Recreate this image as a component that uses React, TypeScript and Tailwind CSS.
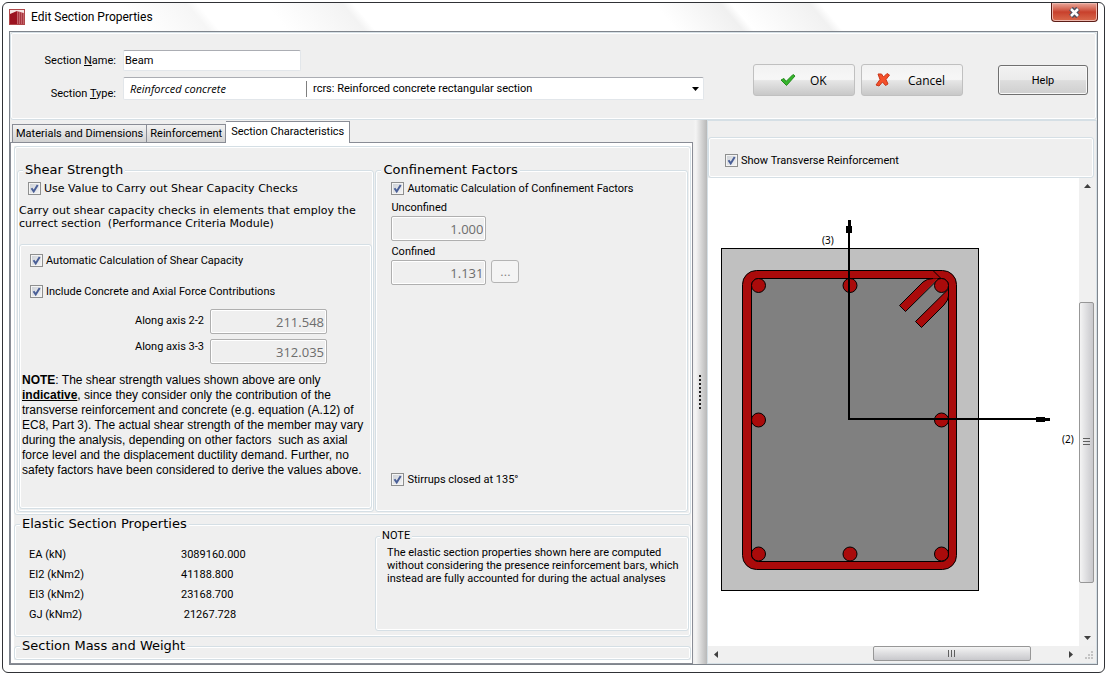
import type { ReactNode } from "react";

interface CheckProps {
  id: string;
  children: ReactNode;
  wide?: boolean;
}

function Check({ id, children, wide = false }: CheckProps) {
  return (
    <label htmlFor={id} className="flex h-[18px] items-center gap-[3px]">
      <span className="relative block h-[13px] w-[13px] shrink-0">
        <input
          id={id}
          type="checkbox"
          defaultChecked
          className="peer block h-[13px] w-[13px] appearance-none border border-[#8e8f8f] bg-gradient-to-br from-[#cbcfd5] to-[#f6f6f6] shadow-[inset_0_0_0_1px_#f4f4f4]"
        />
        <svg viewBox="0 0 13 13" className="pointer-events-none absolute inset-0 hidden h-[13px] w-[13px] peer-checked:block">
          <path d="M3.5 6.2 L5.7 9.4 L9.7 2.9" fill="none" stroke="#4a5f97" strokeWidth="2" />
        </svg>
      </span>
      <span className={wide ? "font-['DejaVu_Sans',sans-serif] text-[11px] whitespace-nowrap" : "whitespace-nowrap"}>{children}</span>
    </label>
  );
}

interface GroupProps {
  title: string;
  className?: string;
  children?: ReactNode;
}

function Group({ title, className = "", children }: GroupProps) {
  return (
    <fieldset className={`min-w-0 rounded-[3px] border border-[#d5dfe5] shadow-[inset_0_0_0_1px_#fff] ${className}`}>
      <legend className="ml-[5px] bg-[#efefef] px-[2px] font-['DejaVu_Sans',sans-serif] text-[13px] leading-[18px]">{title}</legend>
      {children}
    </fieldset>
  );
}

function ValueBox({ id, value, className }: { id: string; value: string; className: string }) {
  return (
    <input
      id={id}
      disabled
      defaultValue={value}
      className={`h-[25px] rounded-[2px] border border-[#afafaf] bg-[#efefef] pr-[2px] text-right font-['Open_Sans',sans-serif] text-[13px] text-[#6d6d6d] shadow-[inset_0_0_0_1px_#fff] ${className}`}
    />
  );
}

const properties = [
  { name: "EA (kN)", value: "3089160.000" },
  { name: "EI2 (kNm2)", value: "41188.800" },
  { name: "EI3 (kNm2)", value: "23168.700" },
  { name: "GJ (kNm2)", value: " 21267.728" },
];

const bars = [
  [50.5, 107.5],
  [142, 107.5],
  [233.5, 107.5],
  [50.5, 242],
  [233.5, 242],
  [50.5, 376],
  [142, 376],
  [233.5, 376],
];

function SectionDrawing() {
  return (
    <svg width="371" height="468" viewBox="0 0 371 468" className="block shrink-0">
      <rect x="13.5" y="70.5" width="257" height="342" fill="#c0c0c0" stroke="#000" />
      {/* stirrup */}
      <rect x="34.5" y="92.5" width="214" height="299" rx="14" fill="#aa0b0b" stroke="#000" />
      <rect x="43.5" y="100.5" width="197" height="283" rx="7" fill="#808080" stroke="#000" />
      {/* 135 degree hooks */}
      <path d="M191.500 127.500 L215 104 Q219 100.500 225 100.500 L230 100.500 L197.500 133.500 Z" fill="#aa0b0b" />
      <path d="M231 100.500 L197.500 133.500 L191.500 127.500 L215 104 Q219 100.500 225 100.500" fill="none" stroke="#000" />
      <path d="M240.500 111 L207.500 143.500 L213.500 149.500 L236 127 Q240.500 122 240.500 118 Z" fill="#aa0b0b" stroke="#000" />
      <path d="M225 92.500 L233 100.500" stroke="#000" />
      {bars.map(([cx, cy]) => (
        <circle key={`${cx}-${cy}`} cx={cx} cy={cy} r="7" fill="#aa0b0b" stroke="#000" />
      ))}
      {/* local axes */}
      <path d="M141 44 V241 H340" fill="none" stroke="#000" strokeWidth="2" />
      <path d="M140 42 h3 v6 h1 v7 h-6 v-7 h2 Z" />
      <path d="M328 239 h9 v1 h5 v3 h-5 v1 h-9 Z" />
      <text x="114" y="66" className="font-['Noto_Sans',sans-serif] text-[10px]">(3)</text>
      <text x="354" y="265" className="font-['Noto_Sans',sans-serif] text-[10px]">(2)</text>
    </svg>
  );
}

function Arrow({ d, label }: { d: string; label: string }) {
  return (
    <button aria-label={label} className="flex h-[17px] w-[17px] shrink-0 items-center justify-center">
      <svg width="7" height="7" viewBox="0 0 7 7">
        <path d={d} fill="#404040" />
      </svg>
    </button>
  );
}

export default function App() {
  return (
    <div className="flex min-h-screen flex-col bg-white p-[2px] pr-[3px] pb-[3px] font-['Roboto',sans-serif] text-[11px] leading-[13px] text-black">
      <div className="flex flex-1 flex-col rounded-[6px] border border-[#303236] bg-white px-[6px] pb-[7px]">
        {/* title bar */}
        <header className="flex h-[28px] items-center gap-[6px] bg-[linear-gradient(50deg,#fff_12%,#f6f6f6_18%,#fff_19%,#fff_25%,#f3f3f3_32%,#fff_33%,#fff_60%,#f0f0f0_66%,#fff_67%,#f1f1f1_74%,#fff_75%)]">
          <svg width="16" height="16" viewBox="0 0 16 16">
            <rect x=".5" y=".5" width="15" height="15" fill="#f6e4e2" stroke="#b0484a" />
            <path d="M1 5 L8 2 V15 H1 Z" fill="#9c1320" />
            <path d="M8 2 L15 4 V15 H8 Z" fill="#c4636a" />
            <path d="M9.500 3 V15 M11.500 3.500 V15 M13.500 4 V15" stroke="#a83640" />
          </svg>
          <h1 className="flex-1 text-[12px] leading-4">Edit Section Properties</h1>
          <button
            aria-label="Close"
            className="flex h-[19px] w-[47px] items-center justify-center self-start rounded-b-[4px] border border-t-0 border-[#5c1d17] bg-gradient-to-b from-[#e8a79b] via-[#c8402c] via-50% to-[#d9694c] shadow-[inset_0_0_0_1px_#eeb8ad]"
          >
            <svg width="13" height="11" viewBox="0 0 13 11">
              <path d="M3 1.500 L10 9.500 M10 1.500 L3 9.500" stroke="#4b4f5f" strokeWidth="5" />
              <path d="M3 2 L10 9 M10 2 L3 9" stroke="#fff" strokeWidth="2.500" />
            </svg>
          </button>
        </header>

        <div className="flex flex-1 flex-col border border-[#7f858d] bg-[#efefef]">
          {/* name, type and dialog buttons */}
          <div className="flex items-start gap-[49px] rounded-[3px] border border-[#d5dfe5] pr-2 pb-[19px] pt-[17px] shadow-[inset_0_0_0_1px_#fff]">
            <div className="grid flex-1 grid-cols-[105px_minmax(0,1fr)] gap-x-[7px] gap-y-[6px]">
              <label htmlFor="name" className="self-center text-right">
                Section <u>N</u>ame:
              </label>
              <input
                id="name"
                defaultValue="Beam"
                className="h-[21px] w-[178px] rounded-[2px] border border-[#e2e6ea] border-t-[#abadb3] bg-white px-px"
              />
              <label htmlFor="type" className="self-end text-right">
                Section <u>T</u>ype:
              </label>
              <div className="relative flex h-[23px] items-center rounded-[2px] border border-[#e2e6ea] border-t-[#abadb3] bg-white">
                <span className="w-[182px] pl-[6px] font-['Open_Sans',sans-serif] italic">Reinforced concrete</span>
                <select id="type" className="h-4 flex-1 appearance-none border-l border-[#7f7f7f] pl-[6px] leading-4">
                  <option>rcrs: Reinforced concrete rectangular section</option>
                </select>
                <svg width="7" height="4" viewBox="0 0 7 4" className="pointer-events-none absolute right-1">
                  <path d="M0 0 H7 L3.500 4 Z" />
                </svg>
              </div>
            </div>

            <div className="flex items-center pt-[14px] font-['Open_Sans',sans-serif] text-[12px]">
              <button className="mr-[6px] flex h-8 w-[102px] items-center rounded-[3px] border border-[#c0c0c0] bg-[linear-gradient(#f2f2f2,#f7f7f7_48%,#e6e6e6_52%,#c8c8c8)] pl-[26px]">
                <svg width="16" height="14" viewBox="0 0 16 14" className="mr-[14px]">
                  <path d="M1 7 L4 5.500 L6 8.500 L13 1.500 L15 3 L6.500 12.500 Z" fill="#35b52b" stroke="#258b1e" />
                </svg>
                OK
              </button>
              <button className="mr-[35px] flex h-8 w-[102px] items-center rounded-[3px] border border-[#c0c0c0] bg-[linear-gradient(#f2f2f2,#f7f7f7_48%,#e6e6e6_52%,#c8c8c8)] pl-[13px]">
                <svg width="16" height="14" viewBox="0 0 16 14" className="mr-[17px]">
                  <path d="M3 1 L6.500 1 L8.500 4 L12 .5 L14.500 2 L11 6.500 L13 11 L10.500 12.500 L7.500 9 L4 13 L1 12 L5 6.500 Z" fill="#f4502a" stroke="#c9361a" />
                </svg>
                Cancel
              </button>
              <button className="h-[30px] w-[90px] rounded-[3px] border border-[#707070] bg-[linear-gradient(#f2f2f2,#ebebeb_50%,#dddddd_52%,#cfcfcf)] font-['Roboto',sans-serif] text-[11px] shadow-[inset_0_0_0_1px_#f8f8f8]">
                Help
              </button>
            </div>
          </div>

          <div className="grid flex-1 grid-cols-[683fr_14px_390fr]">
            <div className="flex min-w-0 flex-col">
              <div role="tablist" className="relative z-10 -mb-px flex items-end pt-px pl-[2px]">
                <button role="tab" className="h-[19px] border border-[#898c95] bg-gradient-to-b from-[#f2f2f2] to-[#d2d2d2] px-[3px]">
                  Materials and Dimensions
                </button>
                <button role="tab" className="h-[19px] border border-l-0 border-[#898c95] bg-gradient-to-b from-[#f2f2f2] to-[#d2d2d2] px-[3px]">
                  Reinforcement
                </button>
                <button role="tab" aria-selected="true" className="h-[22px] border border-b-0 border-l-0 border-[#898c95] bg-white px-[5px] pb-[3px]">
                  Section Characteristics
                </button>
              </div>

              <div className="flex flex-1 flex-col border border-[#898c95] bg-white p-[3px] pr-px">
                <div className="flex flex-1 flex-col bg-[#efefef]">
                  <div className="grid flex-1 grid-cols-[358fr_313fr] gap-px rounded-[3px] border border-[#d5dfe5] p-[2px] pt-[14px] shadow-[inset_0_0_0_1px_#fff]">
                    <Group title="Shear Strength">
                      <div className="flex flex-col px-px pb-px">
                        <div className="pl-[9px]">
                          <Check id="useValue" wide>
                            Use Value to Carry out Shear Capacity Checks
                          </Check>
                        </div>
                        <p className="mt-[7px] font-['DejaVu_Sans',sans-serif] text-[11px] leading-[13px] whitespace-pre">
                          {"Carry out shear capacity checks in elements that employ the\ncurrect section  (Performance Criteria Module)"}
                        </p>
                        <div className="mt-[14px] rounded-[3px] border border-[#d5dfe5] pt-[6px] pb-[30px] shadow-[inset_0_0_0_1px_#fff]">
                          <div className="flex flex-col gap-[13px] pl-[10px]">
                            <Check id="autoShear">Automatic Calculation of Shear Capacity</Check>
                            <Check id="axial">Include Concrete and Axial Force Contributions</Check>
                          </div>
                          <div className="mt-[9px] grid grid-cols-[184px_117px] gap-x-[6px] gap-y-[5px]">
                            <label htmlFor="axis22" className="mt-[5px] text-right">Along axis 2-2</label>
                            <ValueBox id="axis22" value="211.548" className="w-full" />
                            <label htmlFor="axis33" className="mt-px text-right">Along axis 3-3</label>
                            <ValueBox id="axis33" value="312.035" className="w-full" />
                          </div>
                          <p className="mt-[9px] px-[2px] font-['Liberation_Sans',sans-serif] text-[12px] leading-[15px] whitespace-pre">
                            <b>NOTE</b>: The shear strength values shown above are only
                            <br />
                            <b className="underline">indicative</b>, since they consider only the contribution of the
                            <br />
                            transverse reinforcement and concrete (e.g. equation (A.12) of
                            <br />
                            EC8, Part 3). The actual shear strength of the member may vary
                            <br />
                            {"during the analysis, depending on other factors  such as axial"}
                            <br />
                            force level and the displacement ductility demand. Further, no
                            <br />
                            safety factors have been considered to derive the values above.
                          </p>
                        </div>
                      </div>
                    </Group>

                    <Group title="Confinement Factors">
                      <div className="flex flex-col pl-[15px]">
                        <Check id="autoConf">Automatic Calculation of Confinement Factors</Check>
                        <label htmlFor="unconfined" className="mt-1">Unconfined</label>
                        <ValueBox id="unconfined" value="1.000" className="mt-[2px] w-[95px]" />
                        <label htmlFor="confined" className="mt-1">Confined</label>
                        <div className="mt-[2px] flex gap-[5px]">
                          <ValueBox id="confined" value="1.131" className="w-[95px]" />
                          <button className="h-[23px] w-7 rounded-[3px] border border-[#b4b4b4] bg-[#f4f4f4] text-[13px] text-[#838383]">...</button>
                        </div>
                        <div className="mt-[185px]">
                          <Check id="stirrups">Stirrups closed at 135°</Check>
                        </div>
                      </div>
                    </Group>
                  </div>

                  <Group title="Elastic Section Properties" className="pb-[5px]">
                    <div className="grid grid-cols-[359fr_314fr]">
                      <table className="mt-[11px] ml-[14px] self-start">
                        <tbody>
                          {properties.map((p) => (
                            <tr key={p.name} className="h-5">
                              <th scope="row" className="w-[152px] text-left font-normal">{p.name}</th>
                              <td className="whitespace-pre">{p.value}</td>
                            </tr>
                          ))}
                        </tbody>
                      </table>
                      <fieldset className="-mt-1 mr-px h-[102px] min-w-0 rounded-[3px] border border-[#d5dfe5] shadow-[inset_0_0_0_1px_#fff]">
                        <legend className="ml-1 bg-[#efefef] px-[2px] leading-[14px]">NOTE</legend>
                        <p className="mt-[3px] pl-[11px] whitespace-pre">
                          {"The elastic section properties shown here are computed\nwithout considering the presence reinforcement bars, which\ninstead are fully accounted for during the actual analyses"}
                        </p>
                      </fieldset>
                    </div>
                  </Group>

                  <Group title="Section Mass and Weight" className="pb-1" />
                </div>
              </div>
            </div>

            {/* splitter */}
            <div className="flex items-center justify-center bg-gradient-to-r from-[#efefef] via-[#f4f4f4] via-20% to-[#b8b8b8]">
              <svg width="3" height="35" viewBox="0 0 3 35">
                <path d="M1 0 V35" stroke="#202020" strokeWidth="2" strokeDasharray="2 2" />
              </svg>
            </div>

            <div className="flex min-w-0 flex-col border border-[#d5dfe5]">
              <div className="mt-[16px] mr-[2px] rounded-[3px] border border-[#d5dfe5] pt-[13px] pb-2 pl-4 shadow-[inset_0_0_0_1px_#fff]">
                <Check id="transverse">Show Transverse Reinforcement</Check>
              </div>
              <div className="grid flex-1 grid-cols-[minmax(0,1fr)_17px] grid-rows-[minmax(0,1fr)_17px]">
                <div className="overflow-hidden bg-white">
                  <SectionDrawing />
                </div>
                <div className="flex flex-col bg-[#f0f0f0]">
                  <Arrow d="M0 5 L3.5 1 L7 5 Z" label="Scroll up" />
                  <div className="grow-[107] basis-0" />
                  <div className="flex w-[15px] grow-[281] basis-0 items-center justify-center rounded-[2px] border border-[#979797] bg-gradient-to-r from-[#f4f4f4] to-[#c8c8cc]">
                    <svg width="7" height="8" viewBox="0 0 7 8">
                      <path d="M0 .5 H7 M0 3.500 H7 M0 6.500 H7" stroke="#5f5f5f" />
                    </svg>
                  </div>
                  <div className="grow-[46] basis-0" />
                  <Arrow d="M0 2 H7 L3.5 6 Z" label="Scroll down" />
                </div>
                <div className="flex bg-[#f0f0f0]">
                  <Arrow d="M5 0 L1 3.5 L5 7 Z" label="Scroll left" />
                  <div className="grow-[148] basis-0" />
                  <div className="flex h-[15px] grow-[157] basis-0 items-center justify-center rounded-[2px] border border-[#979797] bg-gradient-to-b from-[#f4f4f4] to-[#c8c8cc]">
                    <svg width="8" height="7" viewBox="0 0 8 7">
                      <path d="M.5 0 V7 M3.500 0 V7 M6.500 0 V7" stroke="#5f5f5f" />
                    </svg>
                  </div>
                  <div className="grow-[31] basis-0" />
                  <Arrow d="M2 0 L6 3.5 L2 7 Z" label="Scroll right" />
                </div>
                <svg width="17" height="17" viewBox="0 0 17 17">
                  <path d="M12 5h2v2h-2z M9 8h2v2h-2z M12 8h2v2h-2z M6 11h2v2h-2z M9 11h2v2h-2z M12 11h2v2h-2z" fill="#c4c4c4" />
                </svg>
              </div>
            </div>
          </div>
        </div>
      </div>
    </div>
  );
}
